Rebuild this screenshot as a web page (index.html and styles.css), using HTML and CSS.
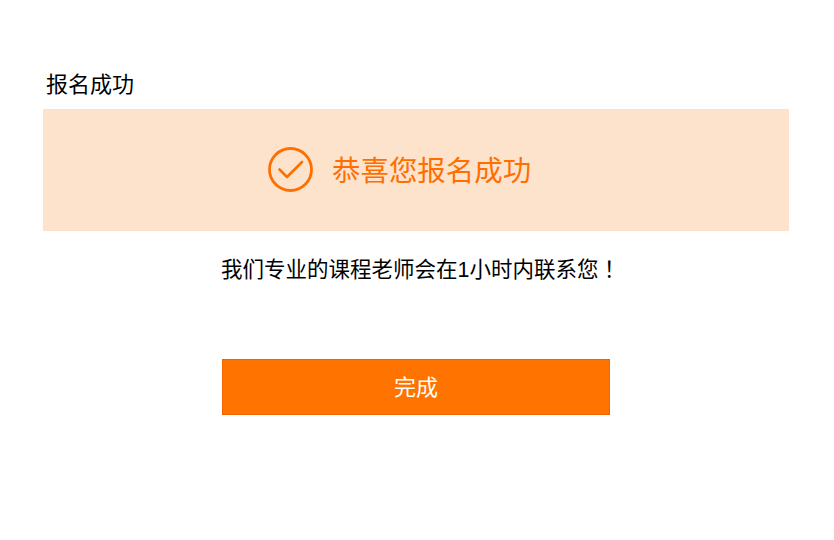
FILE: index.html
```html
<!DOCTYPE html>
<html lang="zh-CN">
<head>
    <meta charset="UTF-8">
    <title>报名成功</title>
    <link rel="stylesheet" href="styles.css">
</head>
<body>
    <div class="page">
        <h2 class="title">报名成功</h2>
        <div class="banner">
            <svg class="check" width="46" height="46" viewBox="0 0 46 46">
                <circle cx="22.5" cy="22.5" r="21" fill="none" stroke="#ff6f00" stroke-width="2.8"/>
                <path d="M11.5 22.5 L19 30 L34 15" fill="none" stroke="#ff6f00" stroke-width="2.6" stroke-linecap="round" stroke-linejoin="round"/>
            </svg>
            <span class="banner-text">恭喜您报名成功</span>
        </div>
        <p class="note">我们专业的课程老师会在1小时内联系您<span class="bang" lang="zh-TW">！</span></p>
        <button class="done"><span class="done-label">完成</span></button>
    </div>
</body>
</html>
```

FILE: styles.css
```css
body {
    margin: 0;
    background-color: #fff;
    font-family: "Liberation Sans", "Noto Sans CJK SC", sans-serif;
}
.page {
    display: flex;
    flex-direction: column;
    padding: 72px 45px 0 43px;
}
.title {
    margin: 0 0 11px 3px;
    font-size: 22px;
    line-height: 26px;
    font-weight: normal;
    color: #000;
}
.banner {
    display: flex;
    align-items: center;
    gap: 18px;
    height: 122px;
    padding-left: 225px;
    background-color: #fee3cc;
}
.check {
    flex-shrink: 0;
}
.banner-text {
    margin-top: -4px;
    font-size: 28.45px;
    color: #ff6f00;
}
.note {
    height: 30px;
    margin: 24px 0 0 178px;
    font-size: 21.5px;
    line-height: 30px;
    white-space: nowrap;
    color: #000;
}
.bang {
    font-family: "Noto Sans CJK TC", sans-serif;
    line-height: 0;
}
.done {
    width: 388px;
    height: 56px;
    margin: 74px 0 0 179px;
    padding: 0 0 4px;
    border: 1px solid #f56200;
    background-color: #ff7300;
    color: #fff;
    font-family: inherit;
    font-size: 22px;
}
```
